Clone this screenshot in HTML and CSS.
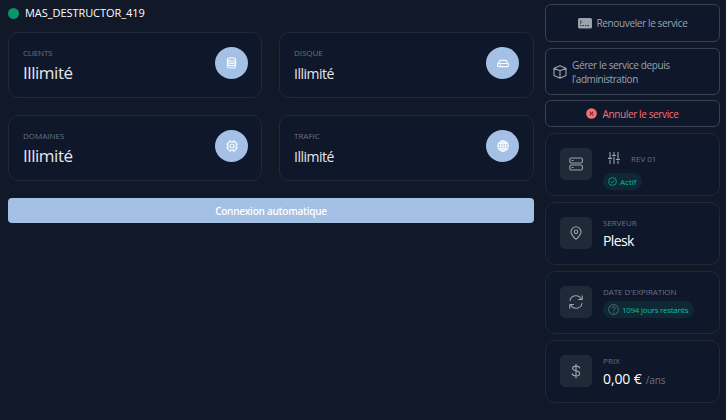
FILE: index.html
```html
<!DOCTYPE html>
<html lang="fr">
<head>
<meta charset="utf-8">
<title>Service</title>
<link rel="stylesheet" href="styles.css">
</head>
<body>
<div class="layout">
  <main class="main">
    <header class="head"><span class="status"></span><h1><span>MAS_DESTRUCTOR_419</span></h1></header>
    <section class="stats">
      <article class="stat big">
        <div><p class="label l-cli">CLIENTS</p><p class="value">Illimité</p></div>
        <span class="round"><svg width="11" height="12" viewBox="0 0 11 12"><ellipse cx="5.5" cy="2.5" rx="4" ry="1.6"/><path d="M1.5 2.5v7c0 2 8 2 8 0v-7M1.5 4.8c0 2 8 2 8 0M1.5 7.1c0 2 8 2 8 0"/></svg></span>
      </article>
      <article class="stat">
        <div><p class="label l-dis">DISQUE</p><p class="value">Illimité</p></div>
        <span class="round"><svg width="12" height="12" viewBox="0 0 12 12"><path d="M1.4 6.2l1-2.200a1.400 1.400 0 0 1 1.200-.7h4.800a1.400 1.400 0 0 1 1.200.7l1 2.200M1.500 6.500h9a.9.900 0 0 1 .9.900v1.300a.9.900 0 0 1-.9.900h-9a.9.900 0 0 1-.9-.9V7.400a.9.900 0 0 1 .9-.9zM2.500 8h1.500"/></svg></span>
      </article>
      <article class="stat big">
        <div><p class="label l-dom">DOMAINES</p><p class="value">Illimité</p></div>
        <span class="round"><svg width="12" height="12" viewBox="0 0 12 12"><rect x="1.7" y="1.7" width="8.600" height="8.600" rx="2.500"/><circle cx="6" cy="6" r="2"/><path d="M4.2.3v1.400M7.800.3v1.400M4.200 10.300v1.400M7.800 10.300v1.400M.3 4.200h1.400M.3 7.800h1.400M10.300 4.200h1.400M10.300 7.800h1.400"/></svg></span>
      </article>
      <article class="stat">
        <div><p class="label l-tra">TRAFIC</p><p class="value">Illimité</p></div>
        <span class="round"><svg width="12" height="12" viewBox="0 0 12 12"><circle cx="6" cy="6" r="5.2"/><ellipse cx="6" cy="6" rx="2.5" ry="5.2"/><path d="M6 .8v10.4M.8 6h10.4M1.5 3.4h9M1.5 8.6h9"/></svg></span>
      </article>
    </section>
    <button class="login"><span>Connexion automatique</span></button>
  </main>
  <aside class="side">
    <button class="action renew"><svg width="14" height="11" viewBox="0 0 14 11"><rect width="14" height="10.6" rx="1.6" fill="#9ca3af"/><path d="m2 2.6 1.6 1.5L2 5.6M2.2 7.5h1.3M4.6 7.5h1.3M7 7.5h1.3M9.4 7.5h1.5" fill="none" stroke="#1f2937"/></svg><span>Renouveler le service</span></button>
    <button class="action manage"><svg width="14" height="14" viewBox="0 0 14 14" class="line"><path d="m7 .8 6 2.5v7.2l-6 2.8-6-2.8V3.3zM1 3.3l6 2.5 6-2.5M7 5.8v7.5"/></svg><span>Gérer le service depuis<br><i>l'administration</i></span></button>
    <button class="action cancel"><svg width="11" height="11" viewBox="0 0 11 11"><circle cx="5.5" cy="5.5" r="5.3" fill="#f87171"/><path d="m3.6 3.6 3.8 3.8M7.4 3.6 3.6 7.4" stroke="#7f2635" stroke-width="1.1"/></svg><span>Annuler le service</span></button>
    <article class="info first">
      <span class="box"><svg class="line" width="16" height="16" viewBox="0 0 16 16"><rect x="1.8" y="2" width="12.6" height="5" rx="1.6"/><rect x="1.8" y="9" width="12.6" height="5" rx="1.6"/><path d="M4.1 4.5h1M4.1 11.5h1"/></svg></span>
      <div><p class="rev"><svg class="line" width="12" height="12" viewBox="0 0 12 12"><path d="M2 .5v5.2M2 8v3.5M6 .5v2M6 5v6.5M10 .5v6M10 9v2.5M.3 6.4h3.4M4.3 3.5h3.4M8.3 7.5h3.4"/></svg><span>REV 01</span></p>
      <span class="pill active"><svg width="9" height="9" viewBox="0 0 9 9" class="teal"><circle cx="4.500" cy="4.500" r="3.900"/><path d="M2.800 4.600l1.300 1.200L6.500 3.200"/></svg><b>Actif</b></span></div>
    </article>
    <article class="info">
      <span class="box"><svg class="line" width="16" height="16" viewBox="0 0 16 16"><path d="M8 14.3C5.5 12.2 3 9.7 3 6.8a5 5 0 0 1 10 0c0 2.900-2.500 5.400-5 7.500z"/><circle cx="8" cy="6.8" r="1.8"/></svg></span>
      <div><p class="label l-ser">SERVEUR</p><p class="strong plesk">Plesk</p></div>
    </article>
    <article class="info">
      <span class="box"><svg class="line" width="16" height="16" viewBox="0 0 16 16"><path d="M2 6.500A6 6 0 0 1 13.300 5.200M14.200 1.800v3.700h-3.700M14 9.500A6 6 0 0 1 2.700 10.800M1.800 14.200v-3.700h3.700"/></svg></span>
      <div><p class="label l-dat">DATE D'EXPIRATION</p><span class="pill days"><svg class="query" width="11" height="11" viewBox="0 0 11 11"><circle cx="5.500" cy="5.500" r="4.900"/><path d="M4 4.300c0-2 3.200-2 3.200 0 0 1.200-1.700 1.100-1.700 2.300M5.500 7.600v1"/></svg><b>1094 jours restants</b></span></div>
    </article>
    <article class="info">
      <span class="box"><svg class="line" width="16" height="16" viewBox="0 0 16 16"><path d="M8 1.300v13.400M11.600 5C11 2.500 4.600 2.400 4.600 5.300c0 3.500 7.100 1.500 7.100 5.200 0 3.200-7 3.200-7.500.2"/></svg></span>
      <div><p class="label l-pri">PRIX</p><p class="strong price"><span>0,00 €</span><small>/ans</small></p></div>
    </article>
  </aside>
</div>
</body>
</html>
```

FILE: styles.css
```css
* { box-sizing: border-box; }
body { margin: 0; background: #111827; color: #fff; font-family: "Open Sans", "Noto Sans", sans-serif; }
p, h1 { margin: 0; font-weight: 400; white-space: nowrap; }
svg { display: block; flex: none; }
button { font: inherit; margin: 0; padding: 0; }
.layout { display: grid; grid-template-columns: 526px 175px; gap: 11px; padding: 4px 6px 0 8px; height: 420px; overflow: hidden; align-items: start; }
.head { display: flex; align-items: center; height: 18px; margin-bottom: 10px; gap: 6px; }
.status { width: 11px; height: 11px; border-radius: 50%; background: #059669; }
h1 { font-size: 11px; line-height: 18px; letter-spacing: -.06px; }
.stats { display: grid; grid-template-columns: 254px 255px; gap: 17px; }
.stat { display: flex; justify-content: space-between; height: 66px; padding: 14px 14px 0 14px; border: 1px solid #1f2937; border-radius: 10px; background: #0f172a; }
.stat.big { padding-right: 13px; }
.label { font-size: 8px; line-height: 12px; letter-spacing: -.2px; color: #6b7280; }
.l-dis, .l-dat { letter-spacing: -.05px; }
.l-dom, .l-tra, .l-ser { letter-spacing: 0; }
.l-pri { letter-spacing: .1px; }
.stat .value { font-size: 14px; line-height: 18px; padding-top: 6px; letter-spacing: -.5px; color: #e5e7eb; height: 30px; }
.stat.big .value { font-size: 17px; line-height: 24px; padding-top: 2px; letter-spacing: -.45px; }
.round { display: flex; align-items: center; justify-content: center; width: 33px; height: 32px; border-radius: 50%; background: #a4c0e4; }
.round svg { fill: none; stroke: #f7faff; stroke-width: 1.2; }
.login { display: block; width: 526px; height: 25px; margin-top: 17px; border: 0; border-radius: 4px; background: #a4c0e4; color: #fff; font-size: 10px; line-height: 25px; font-weight: 600; letter-spacing: -.25px; padding-top: 1px; }
.action { display: flex; align-items: center; justify-content: center; width: 175px; border: 1px solid #374151; border-radius: 6px; background: #0f172a; color: #9ca3af; font-size: 10px; line-height: 14px; letter-spacing: -.37px; text-align: left; white-space: nowrap; }
.action i { font-style: normal; letter-spacing: -.45px; }
.renew { height: 38px; gap: 5px; }
.manage { height: 47px; margin-top: 6px; gap: 5px; justify-content: flex-start; padding-left: 7px; }
.cancel { height: 27px; margin-top: 5px; gap: 5px; color: #f87171; }
.line { fill: none; stroke: #9ca3af; stroke-width: 1.1; stroke-linecap: round; stroke-linejoin: round; }
.info { display: flex; gap: 11px; height: 63px; margin-top: 6px; padding: 14px 0 0 14px; border: 1px solid #1f2937; border-radius: 10px; background: #0f172a; }
.box { display: flex; align-items: center; justify-content: center; width: 32px; height: 32px; border-radius: 5px; background: #1f2937; }
.rev { display: flex; align-items: center; gap: 11px; height: 16px; margin: 3px 0 6px 5px; padding-bottom: 3px; font-size: 8px; color: #6b7280; }
.rev span { padding-top: 2px; }
.pill { display: flex; align-items: center; height: 17px; border-radius: 9px; padding-left: 5px; background: #0e2834; font-size: 8px; line-height: 17px; color: #14b8a6; white-space: nowrap; }
.pill b { font-weight: 400; }
.active { width: 39px; gap: 3px; }
.days { width: 91px; gap: 3px; margin-top: 3px; letter-spacing: -.29px; }
.teal { fill: none; stroke: #14a08f; stroke-width: .9; }
.query { fill: none; stroke: #5b7480; stroke-width: .9; }
.strong { font-size: 14px; line-height: 19px; margin-top: 2px; color: #fff; }
.plesk { letter-spacing: -.6px; }
.price { display: flex; align-items: baseline; gap: 4px; letter-spacing: -.1px; }
small { font-size: 10px; color: #6b7280; }
```
